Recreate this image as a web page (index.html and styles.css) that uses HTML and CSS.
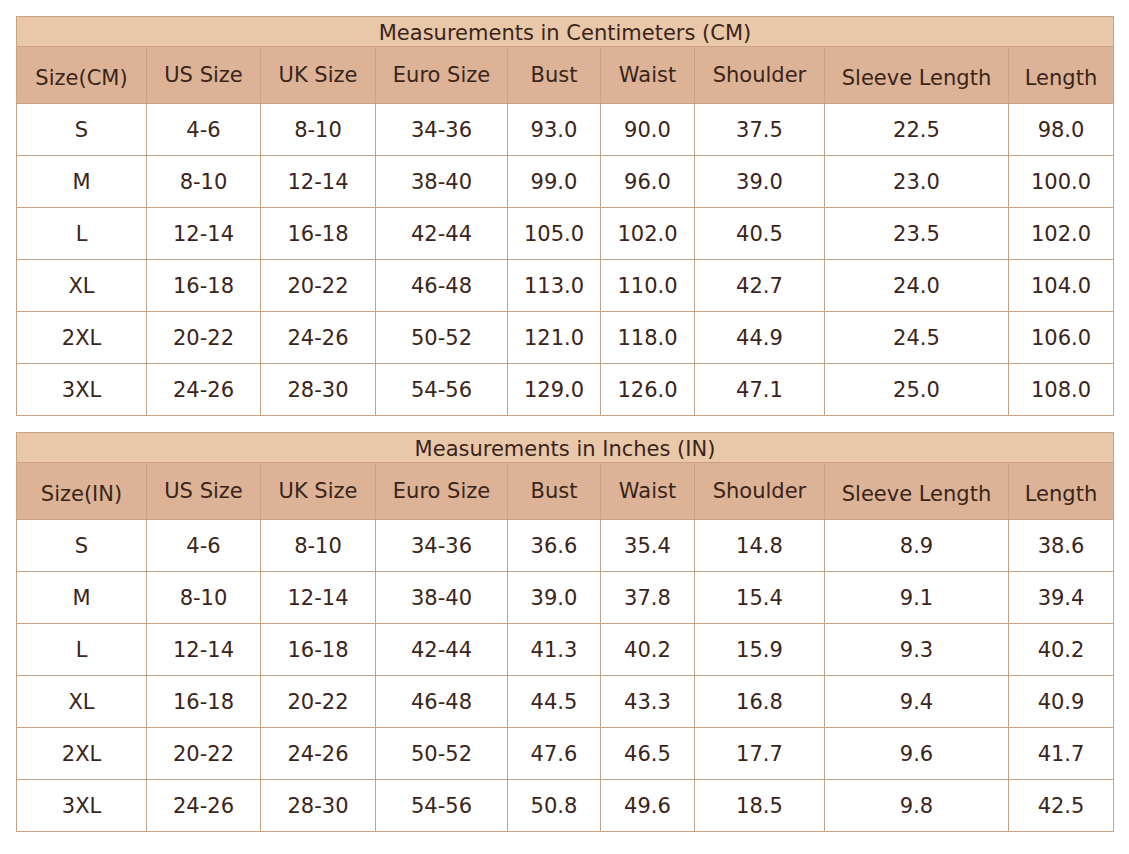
FILE: index.html
```html
<!DOCTYPE html>
<html>
<head>
<meta charset="utf-8">
<link rel="stylesheet" href="styles.css">
</head>
<body>
<table class="size-table">
  <colgroup>
    <col class="c1"><col class="c2"><col class="c3"><col class="c4"><col class="c5"><col class="c6"><col class="c7"><col class="c8"><col class="c9">
  </colgroup>
  <tr class="title-row"><th colspan="9">Measurements in Centimeters (CM)</th></tr>
  <tr class="head-row">
    <th class="low">Size(CM)</th><th>US Size</th><th>UK Size</th><th>Euro Size</th><th>Bust</th><th>Waist</th><th>Shoulder</th><th class="low">Sleeve Length</th><th class="low">Length</th>
  </tr>
  <tr><td>S</td><td>4-6</td><td>8-10</td><td>34-36</td><td>93.0</td><td>90.0</td><td>37.5</td><td>22.5</td><td>98.0</td></tr>
  <tr><td>M</td><td>8-10</td><td>12-14</td><td>38-40</td><td>99.0</td><td>96.0</td><td>39.0</td><td>23.0</td><td>100.0</td></tr>
  <tr><td>L</td><td>12-14</td><td>16-18</td><td>42-44</td><td>105.0</td><td>102.0</td><td>40.5</td><td>23.5</td><td>102.0</td></tr>
  <tr><td>XL</td><td>16-18</td><td>20-22</td><td>46-48</td><td>113.0</td><td>110.0</td><td>42.7</td><td>24.0</td><td>104.0</td></tr>
  <tr><td>2XL</td><td>20-22</td><td>24-26</td><td>50-52</td><td>121.0</td><td>118.0</td><td>44.9</td><td>24.5</td><td>106.0</td></tr>
  <tr><td>3XL</td><td>24-26</td><td>28-30</td><td>54-56</td><td>129.0</td><td>126.0</td><td>47.1</td><td>25.0</td><td>108.0</td></tr>
</table>

<table class="size-table">
  <colgroup>
    <col class="c1"><col class="c2"><col class="c3"><col class="c4"><col class="c5"><col class="c6"><col class="c7"><col class="c8"><col class="c9">
  </colgroup>
  <tr class="title-row"><th colspan="9">Measurements in Inches (IN)</th></tr>
  <tr class="head-row">
    <th class="low">Size(IN)</th><th>US Size</th><th>UK Size</th><th>Euro Size</th><th>Bust</th><th>Waist</th><th>Shoulder</th><th class="low">Sleeve Length</th><th class="low">Length</th>
  </tr>
  <tr><td>S</td><td>4-6</td><td>8-10</td><td>34-36</td><td>36.6</td><td>35.4</td><td>14.8</td><td>8.9</td><td>38.6</td></tr>
  <tr><td>M</td><td>8-10</td><td>12-14</td><td>38-40</td><td>39.0</td><td>37.8</td><td>15.4</td><td>9.1</td><td>39.4</td></tr>
  <tr><td>L</td><td>12-14</td><td>16-18</td><td>42-44</td><td>41.3</td><td>40.2</td><td>15.9</td><td>9.3</td><td>40.2</td></tr>
  <tr><td>XL</td><td>16-18</td><td>20-22</td><td>46-48</td><td>44.5</td><td>43.3</td><td>16.8</td><td>9.4</td><td>40.9</td></tr>
  <tr><td>2XL</td><td>20-22</td><td>24-26</td><td>50-52</td><td>47.6</td><td>46.5</td><td>17.7</td><td>9.6</td><td>41.7</td></tr>
  <tr><td>3XL</td><td>24-26</td><td>28-30</td><td>54-56</td><td>50.8</td><td>49.6</td><td>18.5</td><td>9.8</td><td>42.5</td></tr>
</table>
</body>
</html>
```

FILE: styles.css
```css
html, body {
  margin: 0;
  padding: 0;
  background: #ffffff;
}
body {
  padding: 16px 16px 0 16px;
  font-family: "DejaVu Sans", Verdana, sans-serif;
  color: #3b2419;
}
.size-table {
  border-collapse: collapse;
  table-layout: fixed;
  width: 1097px;
  margin-bottom: 16px;
}
.c1 { width: 130px; }
.c2 { width: 114px; }
.c3 { width: 115px; }
.c4 { width: 132px; }
.c5 { width: 93px; }
.c6 { width: 94px; }
.c7 { width: 130px; }
.c8 { width: 184px; }
.c9 { width: 105px; }
.size-table th,
.size-table td {
  border: 1px solid #c9a183;
  text-align: center;
  padding: 0;
  font-weight: normal;
  font-size: 21px;
  line-height: 24px;
}
.title-row th {
  background: #e9c8a9;
  height: 25px;
  padding-top: 4px;
  font-size: 21px;
  line-height: 25px;
}
.head-row th {
  background: #dcb396;
  height: 56px;
  vertical-align: middle;
}
.head-row th.low {
  height: 50px;
  padding-top: 6px;
}
.size-table td {
  height: 51px;
  background: #ffffff;
}
```
